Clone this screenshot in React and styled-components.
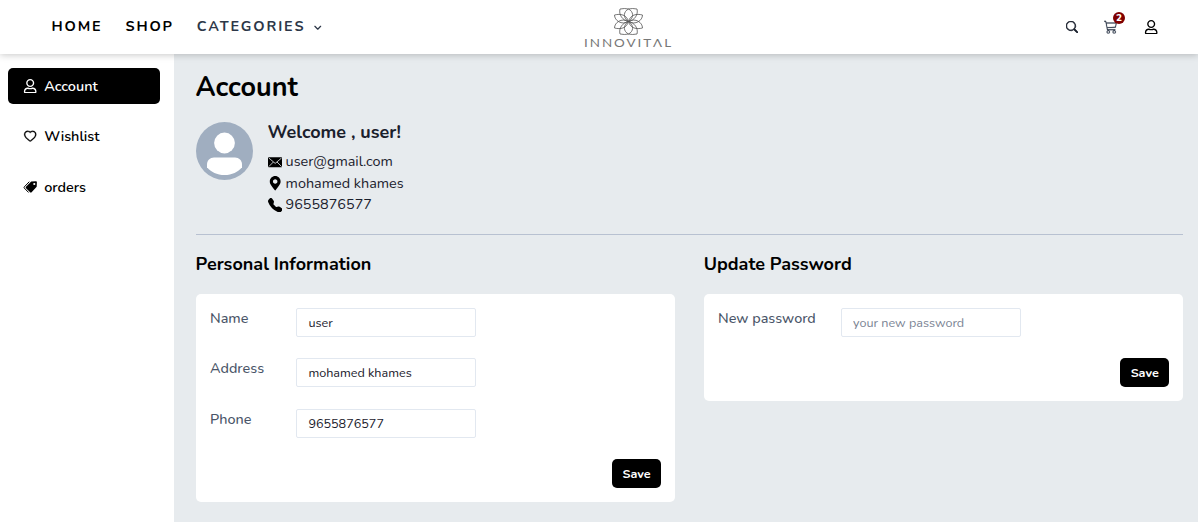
import React from 'react';
import styled, { createGlobalStyle, css } from 'styled-components';
import { FaRegUser, FaMapMarkerAlt } from 'react-icons/fa';
import { FiChevronDown } from 'react-icons/fi';
import { BsCart3, BsTelephoneFill, BsSearch } from 'react-icons/bs';
import { AiOutlineHeart } from 'react-icons/ai';

const GlobalStyle = createGlobalStyle`
  *, *::before, *::after { box-sizing: border-box; }
  html { font-size: 14.4px; }
  body {
    margin: 0;
    overflow: hidden;
    background: #e7ebee;
    color: #1a202c;
    font-family: Nunito, Lato, "Open Sans", sans-serif;
    line-height: 1.5;
  }
  h1, h2, h3, p { margin: 0; }
  svg { display: block; flex: none; }
`;

const Page = styled.div`
  display: flex;
  flex-direction: column;
  height: 522px;
`;

const Header = styled.header`
  position: relative;
  z-index: 1;
  display: grid;
  grid-template-columns: 532px 88px 1fr;
  align-items: center;
  flex: none;
  height: 54px;
  padding: 0 40px 0 51.6px;
  background: #fff;
  box-shadow: 0 1px 7px rgba(0, 0, 0, 0.22);
`;

const Nav = styled.nav`
  display: flex;
  align-items: center;
  gap: 23px;
`;

const NavLink = styled.a`
  display: flex;
  align-items: center;
  gap: 6.6px;
  color: ${(p) => (p.$muted ? '#2d3748' : '#000')};
  font-size: 14.4px;
  font-weight: 700;
  letter-spacing: 1.85px;
  white-space: nowrap;
  svg { margin-top: 2px; }
`;

const Logo = styled.svg`
  width: 88px;
  height: 42px;
  overflow: visible;
`;

const Actions = styled.div`
  display: flex;
  justify-content: flex-end;
  align-items: center;
  gap: 26px;
`;

const CartButton = styled.div`
  position: relative;
  color: #2d3748;
`;

const Badge = styled.span`
  position: absolute;
  top: -8px;
  right: -7.4px;
  width: 12px;
  height: 12px;
  border-radius: 50%;
  background: #800000;
  color: #fff;
  font-size: 10px;
  font-weight: 800;
  line-height: 12px;
  text-align: center;
`;

const Body = styled.div`
  display: flex;
  flex: 1;
  min-height: 0;
`;

const Sidebar = styled.aside`
  display: flex;
  flex-direction: column;
  gap: 14.6px;
  flex: none;
  width: 174px;
  padding: 14px 14px 0 8px;
  background: #fff;
`;

const SideItem = styled.a`
  display: flex;
  align-items: center;
  gap: 7px;
  height: 36px;
  padding-left: 14.8px;
  border-radius: 5px;
  color: #000;
  font-size: 14.4px;
  font-weight: 600;
  ${(p) => p.$active && css`
    background: #000;
    color: #fff;
  `}
`;

const SideLabel = styled.span`
  padding-top: 1px;
`;

const Main = styled.main`
  flex: 1;
  padding: 14px 15px 0 21.6px;
`;

const Title = styled.h1`
  padding-top: 1px;
  color: #000;
  font-size: 27px;
  font-weight: 700;
  line-height: 37px;
`;

const Profile = styled.section`
  display: flex;
  gap: 14.4px;
  height: 129px;
  padding-top: 16px;
  border-bottom: 1px solid #b8c1d1;
`;

const Details = styled.div`
  display: flex;
  flex-direction: column;
`;

const Welcome = styled.h2`
  margin-bottom: 9px;
  font-size: 18px;
  font-weight: 700;
  line-height: 20px;
`;

const Contact = styled.p`
  display: flex;
  align-items: center;
  gap: 3.6px;
  height: 21.6px;
  font-size: 14.4px;
  svg { color: #000; }
`;

const Columns = styled.div`
  display: grid;
  grid-template-columns: 1fr 1fr;
  align-items: start;
  gap: 28.8px;
  padding-top: 16px;
`;

const SectionTitle = styled.h3`
  margin-bottom: 16px;
  color: #000;
  font-size: 18px;
  font-weight: 700;
  line-height: 27px;
`;

const Card = styled.form`
  display: flex;
  flex-direction: column;
  gap: 21.6px;
  padding: 14px 14.2px 13.8px 14.4px;
  border-radius: 5px;
  background: #fff;
`;

const Field = styled.label`
  display: grid;
  grid-template-columns: ${(p) => p.$labelWidth}px 180px;
  height: 28.8px;
  color: #4a5568;
  font-size: 14.4px;
  font-weight: 500;
  line-height: 21px;
`;

const Input = styled.input`
  width: 180px;
  height: 29px;
  padding: 0 11.4px;
  border: 1px solid #e2e8f0;
  border-radius: 2px;
  background: #fff;
  color: #1a202c;
  font: 400 12.6px/18px Nunito, Lato, "Open Sans", sans-serif;
  &::placeholder { color: #7b8494; opacity: 1; }
`;

const SaveButton = styled.button`
  align-self: flex-end;
  width: 49.2px;
  height: 28.8px;
  padding: 0 0 0 1px;
  border: 0;
  border-radius: 5px;
  background: #000;
  color: #fff;
  font: 700 12.6px Nunito, Lato, "Open Sans", sans-serif;
`;

const upperPetal = 'M0 0C-6 -4 -5 -10 0 -12.500Q4 -13.500 8.500 -12.500C10 -7 6 -1 0 0';
const sidePetal = 'M0 0C2 -7 8 -8 14 -6.500C14 -1 7 4 0 0';

function LotusLogo() {
  return (
    <Logo viewBox="0 0 88 42" fill="none">
      {[[1, 1], [-1, 1], [1, -1], [-1, -1]].map(([x, y]) => (
        <g key={`${x}${y}`} transform={`translate(44.500 15.500) scale(${x} ${y})`} stroke="#555" strokeWidth="0.8">
          <path d={upperPetal} />
          <path d={sidePetal} />
        </g>
      ))}
      <text x="0" y="40.500" fill="#777" fontSize="11" fontFamily="Lato" fontWeight="400" letterSpacing="1.6" textLength="89" lengthAdjust="spacingAndGlyphs">INNOVITΛL</text>
    </Logo>
  );
}

function Avatar() {
  return (
    <svg width="57.600" height="58" viewBox="0 0 57.600 58">
      <ellipse cx="28.500" cy="29" rx="28.500" ry="29" fill="#a0aec0" />
      <circle cx="28.500" cy="21" r="10.400" fill="#fff" />
      <path fill="#fff" d="M18 35.500h21c4 0 7 3 7 7v2.700C42 50 36 53 28.500 53S15 50 11 45.200V42.500c0-4 3-7 7-7z" />
    </svg>
  );
}

function TagsIcon() {
  return (
    <svg width="14.400" height="14.400" viewBox="0 0 14.400 14.400">
      <path fill="currentColor" fillRule="evenodd" d="M8.200 1.600L13 1.200Q13.900 1.200 13.900 2.100L13.700 6.700L8.600 12.300Q7.900 13 7.200 12.300L3 8.200Q2.300 7.500 3 6.800ZM11.300 2.900a1.100 1.100 0 1 0 0 2.200a1.100 1.100 0 1 0 0-2.200z" />
      <path d="M6.300 1.700L1.300 6.900Q.8 7.500 1.300 8.100L5.600 12.500" fill="none" stroke="currentColor" strokeWidth="1" />
    </svg>
  );
}

function MailIcon() {
  return (
    <svg width="14.400" height="14.400" viewBox="0 0 14.400 14.400">
      <rect x="0" y="2.200" width="14.400" height="10" rx="0.800" fill="currentColor" />
      <path d="M.8 3L7.200 8.400L13.600 3M.8 11.600L5.400 7M13.600 11.600L9 7" fill="none" stroke="#e7ebee" strokeWidth="0.800" />
    </svg>
  );
}

export default function App() {
  return (
    <Page>
      <GlobalStyle />
      <Header>
        <Nav>
          <NavLink>HOME</NavLink>
          <NavLink>SHOP</NavLink>
          <NavLink $muted>CATEGORIES <FiChevronDown size={11.5} strokeWidth={2.6} /></NavLink>
        </Nav>
        <LotusLogo />
        <Actions>
          <BsSearch size={12} color="#1a202c" strokeWidth={0.9} />
          <CartButton>
            <BsCart3 size={13.6} strokeWidth={0.2} />
            <Badge>2</Badge>
          </CartButton>
          <FaRegUser size={14.4} color="#000" />
        </Actions>
      </Header>
      <Body>
        <Sidebar>
          <SideItem $active><FaRegUser size={14.4} /><SideLabel>Account</SideLabel></SideItem>
          <SideItem><AiOutlineHeart size={14.4} strokeWidth={20} /><SideLabel>Wishlist</SideLabel></SideItem>
          <SideItem><TagsIcon /><SideLabel>orders</SideLabel></SideItem>
        </Sidebar>
        <Main>
          <Title>Account</Title>
          <Profile>
            <Avatar />
            <Details>
              <Welcome>Welcome , user!</Welcome>
              <Contact><MailIcon /> user@gmail.com</Contact>
              <Contact><FaMapMarkerAlt size={14.4} /> mohamed khames</Contact>
              <Contact><BsTelephoneFill size={14.4} /> 9655876577</Contact>
            </Details>
          </Profile>
          <Columns>
            <section>
              <SectionTitle>Personal Information</SectionTitle>
              <Card>
                <Field $labelWidth={86}>Name<Input defaultValue="user" /></Field>
                <Field $labelWidth={86}>Address<Input defaultValue="mohamed khames" /></Field>
                <Field $labelWidth={86}>Phone<Input defaultValue="9655876577" /></Field>
                <SaveButton type="button">Save</SaveButton>
              </Card>
            </section>
            <section>
              <SectionTitle>Update Password</SectionTitle>
              <Card>
                <Field $labelWidth={122.6}>New password<Input placeholder="your new password" /></Field>
                <SaveButton type="button">Save</SaveButton>
              </Card>
            </section>
          </Columns>
        </Main>
      </Body>
    </Page>
  );
}
